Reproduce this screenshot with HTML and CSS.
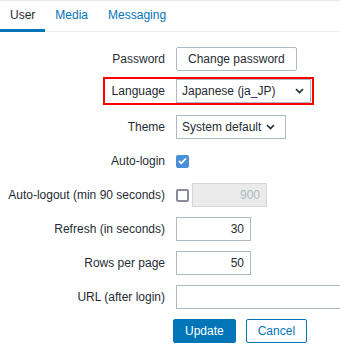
FILE: index.html
```
<!DOCTYPE html>
<html lang="en">
<head>
    <meta charset="UTF-8">
    <meta name="viewport" content="width=device-width, initial-scale=1.0">
    <title>User settings</title>
    <link rel="stylesheet" href="styles.css">
</head>
<body>
    <nav class="tabs">
        <a class="tab active" href="#">User</a>
        <a class="tab" href="#">Media</a>
        <a class="tab" href="#">Messaging</a>
    </nav>
    <form class="form">
        <div class="row">
            <label class="label">Password</label>
            <div class="field"><button type="button" class="btn btn-alt">Change password</button></div>
        </div>
        <div class="row row-marked">
            <label class="label">Language</label>
            <div class="field">
                <div class="select select-lang">
                    <span>Japanese (ja_JP)</span>
                    <svg class="arrow" width="9" height="6" viewBox="0 0 9 6"><path d="M1 1l3.5 3.5L8 1" fill="none" stroke="#1f2c33" stroke-width="1.6"/></svg>
                </div>
            </div>
            <div class="marker"></div>
        </div>
        <div class="row">
            <label class="label">Theme</label>
            <div class="field">
                <div class="select select-theme">
                    <span>System default</span>
                    <svg class="arrow" width="9" height="6" viewBox="0 0 9 6"><path d="M1 1l3.5 3.5L8 1" fill="none" stroke="#1f2c33" stroke-width="1.6"/></svg>
                </div>
            </div>
        </div>
        <div class="row">
            <label class="label">Auto-login</label>
            <div class="field">
                <span class="checkbox checked">
                    <svg width="9" height="8" viewBox="0 0 9 8"><path d="M1 4l2.3 2.3L8 1.3" fill="none" stroke="#fff" stroke-width="1.8"/></svg>
                </span>
            </div>
        </div>
        <div class="row">
            <label class="label">Auto-logout (min 90 seconds)</label>
            <div class="field field-inline">
                <span class="checkbox"></span>
                <input class="input input-num" type="text" value="900" disabled>
            </div>
        </div>
        <div class="row">
            <label class="label">Refresh (in seconds)</label>
            <div class="field"><input class="input input-num" type="text" value="30"></div>
        </div>
        <div class="row">
            <label class="label">Rows per page</label>
            <div class="field"><input class="input input-num" type="text" value="50"></div>
        </div>
        <div class="row">
            <label class="label">URL (after login)</label>
            <div class="field"><input class="input input-url" type="text" value=""></div>
        </div>
        <div class="row">
            <span class="label"></span>
            <div class="field buttons">
                <button type="button" class="btn btn-main">Update</button>
                <button type="button" class="btn btn-cancel">Cancel</button>
            </div>
        </div>
    </form>
</body>
</html>
```

FILE: styles.css
```
body {
    margin: 0;
    font-family: "Liberation Sans", Arial, sans-serif;
    font-size: 12px;
    color: #1f2c33;
    background: #fff;
    overflow: hidden;
}

.tabs {
    display: flex;
    border-top: 1px solid #e6e9eb;
    border-bottom: 1px solid #ebeef0;
    height: 30px;
}

.tab {
    display: block;
    padding: 0 10px;
    line-height: 28px;
    border-bottom: 3px solid transparent;
    margin-bottom: -1px;
    color: #0275b8;
    text-decoration: none;
}

.tab.active {
    color: #1f2c33;
    border-bottom-color: #0275b8;
}

.form {
    display: flex;
    flex-direction: column;
    gap: 10px;
    padding-top: 15px;
}

.row {
    position: relative;
    display: grid;
    grid-template-columns: 165px 1fr;
    column-gap: 11px;
    align-items: center;
    height: 24px;
}

.row-marked {
    margin: -2px 0 2px;
}

.marker {
    position: absolute;
    left: 103px;
    top: -2px;
    width: 207px;
    height: 24px;
    border: 2px solid #f00;
}

.label {
    text-align: right;
    white-space: nowrap;
}

.field {
    display: flex;
    align-items: center;
    min-width: 0;
}

.field-inline {
    gap: 3px;
}

.btn {
    font: inherit;
    height: 24px;
    padding: 0 11px;
    border: 1px solid;
    border-radius: 2px;
    background: #fff;
    cursor: pointer;
}

.btn-alt {
    color: #1f2c33;
    border-color: #acbbc2;
}

.btn-main {
    background: #0275b8;
    border-color: #0275b8;
    color: #fff;
}

.btn-cancel {
    color: #0275b8;
    border-color: #0275b8;
}

.buttons {
    gap: 10px;
    margin-left: -3px;
}

.select {
    box-sizing: border-box;
    display: flex;
    align-items: center;
    justify-content: space-between;
    height: 24px;
    padding: 0 10px 0 5px;
    border: 1px solid #acbbc2;
    background: #fff;
}

.select-lang {
    width: 135px;
    padding-right: 6px;
}

.select-theme {
    width: 110px;
}

.checkbox {
    box-sizing: border-box;
    display: flex;
    align-items: center;
    justify-content: center;
    width: 13px;
    height: 13px;
    border: 2px solid #878b9a;
    border-radius: 2px;
    background: #fff;
}

.checkbox.checked {
    border: none;
    background: #4a90d9;
}

.input {
    box-sizing: border-box;
    height: 24px;
    padding: 0 6px;
    border: 1px solid #acbbc2;
    font: inherit;
    color: #1f2c33;
    background: #fff;
    outline: none;
}

.input-num {
    width: 75px;
    text-align: right;
}

.input[disabled] {
    background: #ebebeb;
    border-color: #d0d8dc;
    color: #acbbc2;
}

.input-url {
    width: 300px;
    flex-shrink: 0;
}
```
